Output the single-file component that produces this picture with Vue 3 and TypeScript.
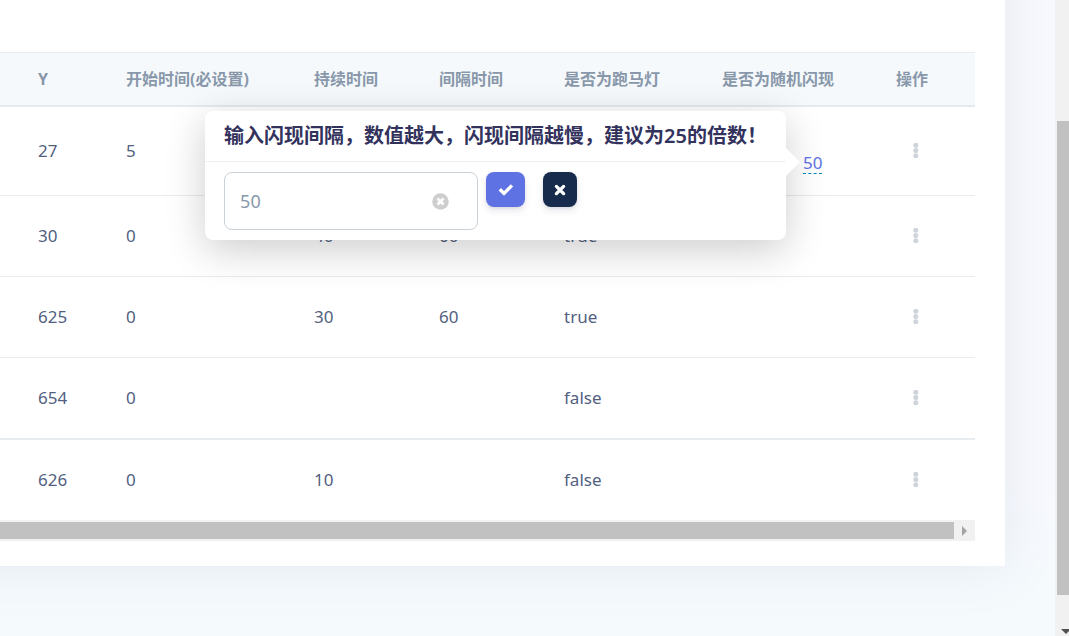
<script setup lang="ts">
import { ref } from 'vue'

interface Row {
  y: string
  start: string
  duration: string
  gap: string
  marquee: string
  flash: string
}

const columns: { label: string; kind: string }[] = [
  { label: 'Y', kind: 'c-y' },
  { label: '开始时间(必设置)', kind: 'c-start' },
  { label: '持续时间', kind: 'c-time' },
  { label: '间隔时间', kind: 'c-time' },
  { label: '是否为跑马灯', kind: 'c-marquee' },
  { label: '是否为随机闪现', kind: 'c-flash' },
  { label: '操作', kind: 'c-action' },
]

const rows: Row[] = [
  { y: '27', start: '5', duration: '', gap: '', marquee: '', flash: '50' },
  { y: '30', start: '0', duration: '40', gap: '60', marquee: 'true', flash: '' },
  { y: '625', start: '0', duration: '30', gap: '60', marquee: 'true', flash: '' },
  { y: '654', start: '0', duration: '', gap: '', marquee: 'false', flash: '' },
  { y: '626', start: '0', duration: '10', gap: '', marquee: 'false', flash: '' },
]

const value = ref('50')
</script>

<template>
  <div class="page">
    <main class="content">
      <section class="card">
        <table class="grid">
          <colgroup>
            <col v-for="c in columns" :key="c.label" :class="c.kind" />
          </colgroup>
          <thead>
            <tr>
              <th v-for="c in columns" :key="c.label" scope="col">{{ c.label }}</th>
            </tr>
          </thead>
          <tbody>
            <tr v-for="row in rows" :key="row.y">
              <td>{{ row.y }}</td>
              <td>{{ row.start }}</td>
              <td>{{ row.duration }}</td>
              <td>{{ row.gap }}</td>
              <td>{{ row.marquee }}</td>
              <td :class="{ editing: row.flash }">
                <span v-if="row.flash" class="anchor">
                  <a href="#" class="editable" @click.prevent>{{ row.flash }}</a>
                  <div class="popover" role="dialog" aria-labelledby="flash-title">
                    <label id="flash-title" class="title" for="flash-input">输入闪现间隔，数值越大，闪现间隔越慢，建议为25的倍数！</label>
                    <form class="form" @submit.prevent>
                      <div class="field">
                        <input id="flash-input" v-model="value" type="text" />
                        <button type="button" class="clear" aria-label="清除" @click="value = ''">
                          <svg viewBox="0 0 16 16" width="17" height="17">
                            <circle cx="8" cy="8" r="7.8" fill="#cecece" />
                            <path d="M5.2 5.2l5.6 5.6M10.8 5.2l-5.6 5.6" stroke="#fff" stroke-width="2.5" />
                          </svg>
                        </button>
                      </div>
                      <button type="submit" class="btn ok" aria-label="确定">
                        <svg viewBox="0 0 16 14" width="16" height="14">
                          <path d="M1.8 6.2l4.2 4.2L14 2.4" fill="none" stroke="#fff" stroke-width="3.4" />
                        </svg>
                      </button>
                      <button type="button" class="btn cancel" aria-label="取消">
                        <svg viewBox="0 0 12 12" width="12" height="12">
                          <path d="M2.4 2.4l7.2 7.2M9.6 2.4l-7.2 7.2" fill="none" stroke="#fff" stroke-width="3.3" stroke-linecap="round" />
                        </svg>
                      </button>
                    </form>
                  </div>
                </span>
              </td>
              <td>
                <button type="button" class="more" aria-label="操作">
                  <svg viewBox="0 0 6 16" width="6" height="16">
                    <circle cx="2.8" cy="2.3" r="2.5" />
                    <circle cx="2.8" cy="7.5" r="2.5" />
                    <circle cx="2.8" cy="12.7" r="2.5" />
                  </svg>
                </button>
              </td>
            </tr>
          </tbody>
        </table>
        <div class="hbar">
          <div class="hthumb"></div>
          <svg class="harrow" viewBox="0 0 5 10" width="5" height="10"><path d="M0 0l5 5-5 5z" fill="#a3a3a3" /></svg>
        </div>
      </section>
    </main>
    <div class="vbar">
      <div class="vspace"></div>
      <div class="vthumb"></div>
      <div class="vend">
        <svg viewBox="0 0 10 5" width="10" height="5"><path d="M0 0h10l-5 5z" fill="#505050" /></svg>
      </div>
    </div>
  </div>
</template>

<style>
body {
  margin: 0;
}
</style>

<style scoped>
.page {
  display: flex;
  min-height: 100vh;
  overflow: hidden;
  font-family: "Noto Sans", "Noto Sans CJK SC", sans-serif;
  font-size: 17px;
  line-height: 24px;
  color: #525f7f;
}
.content {
  flex: 1;
  min-width: 0;
  padding-right: 50px;
  background: linear-gradient(#f8f9fe 75%, #f5fafd 92%);
}
/* The card runs on past the left edge of the window, as do its shadow and padding. */
.card {
  margin-top: -60px;
  margin-left: -60px;
  padding: 112px 30px 25px 60px;
  background: #fff;
  box-shadow: 0 0 48px rgba(136, 152, 170, 0.16);
}
.grid {
  width: 100%;
  table-layout: fixed;
  border-collapse: separate;
  border-spacing: 0;
}
.c-y { width: 102px; }
.c-start { width: 188px; }
.c-time { width: 125px; }
.c-marquee { width: 158px; }
.c-flash { width: 174px; }
.c-action { width: 103px; }
th {
  box-sizing: border-box;
  height: 55px;
  padding: 0 0 0 24px;
  border-top: 1px solid #e9ecef;
  border-bottom: 2px solid #e6eaee;
  background: #f6f9fc;
  color: #8898aa;
  font-size: 16px;
  font-weight: 700;
  text-align: left;
  white-space: nowrap;
}
td {
  box-sizing: border-box;
  height: 81px;
  padding: 0 0 0 24px;
  border-bottom: 1px solid #e9ecef;
  vertical-align: middle;
  white-space: nowrap;
}
th:first-child,
td:first-child {
  padding-left: 38px;
}
tbody tr:first-child td {
  height: 89px;
}
tbody tr:nth-child(4) td {
  height: 82px;
  border-bottom-width: 2px;
}
tbody tr:last-child td {
  height: 80px;
  border-bottom: 0;
}
td.editing {
  padding-top: 24px;
  padding-left: 105px;
}
.anchor {
  position: relative;
  display: inline-block;
}
.editable {
  display: block;
  line-height: 21px;
  color: #5e72e4;
  text-decoration: none;
  border-bottom: 1px dashed #0088cc;
}
.popover {
  position: absolute;
  top: -41px;
  right: calc(100% + 17px);
  z-index: 2;
  width: max-content;
  border-radius: 8px;
  background: #fff;
  box-shadow: 0 10px 40px rgba(0, 0, 0, 0.2);
}
.popover::after {
  content: "";
  position: absolute;
  top: 37px;
  left: 100%;
  border: solid transparent;
  border-width: 14px 0 14px 14px;
  border-left-color: #fff;
}
.title {
  display: block;
  padding: 11px 19px;
  border-bottom: 1px solid #f0f1f3;
  color: #32325d;
  font-size: 20px;
  font-weight: 600;
  line-height: 28px;
}
.form {
  display: flex;
  align-items: flex-start;
  padding: 10px 19px;
}
.field {
  position: relative;
  width: 254px;
  margin-right: 8px;
}
.field input {
  display: block;
  box-sizing: border-box;
  width: 100%;
  height: 58px;
  padding: 0 48px 0 15px;
  border: 1px solid #cad1d7;
  border-radius: 8px;
  outline: 0;
  background: #fff;
  color: #8898aa;
  font: inherit;
  font-size: 18px;
}
.clear {
  position: absolute;
  top: 21px;
  right: 29px;
  display: flex;
  padding: 0;
  border: 0;
  background: none;
}
.btn {
  display: flex;
  align-items: center;
  justify-content: center;
  height: 35px;
  padding: 0;
  border: 0;
  border-radius: 8px;
  box-shadow: 0 4px 7px rgba(50, 50, 93, 0.11), 0 1px 3px rgba(0, 0, 0, 0.08);
}
.ok {
  width: 39px;
  margin-right: 18px;
  background: #5e72e4;
}
.cancel {
  width: 34px;
  background: #172b4d;
}
.more {
  display: flex;
  margin-left: 17px;
  padding: 0;
  border: 0;
  background: none;
}
.more svg {
  fill: #ced4da;
}
.hbar {
  display: flex;
  align-items: center;
  height: 21px;
  background: #f1f1f1;
}
.hthumb {
  flex: 1;
  height: 17px;
  background: #c1c1c1;
}
.harrow {
  margin: 0 8px;
}
.vbar {
  z-index: 1;
  display: flex;
  flex-direction: column;
  width: 14px;
  background: #f1f1f1;
}
.vspace {
  flex: 121;
}
.vthumb {
  flex: 474;
  margin-left: 2px;
  background: #c1c1c1;
}
.vend {
  display: flex;
  flex: 41;
  align-items: flex-end;
  overflow: hidden;
}
.vend svg {
  flex: none;
  margin: 0 0 2px 6px;
}
</style>
